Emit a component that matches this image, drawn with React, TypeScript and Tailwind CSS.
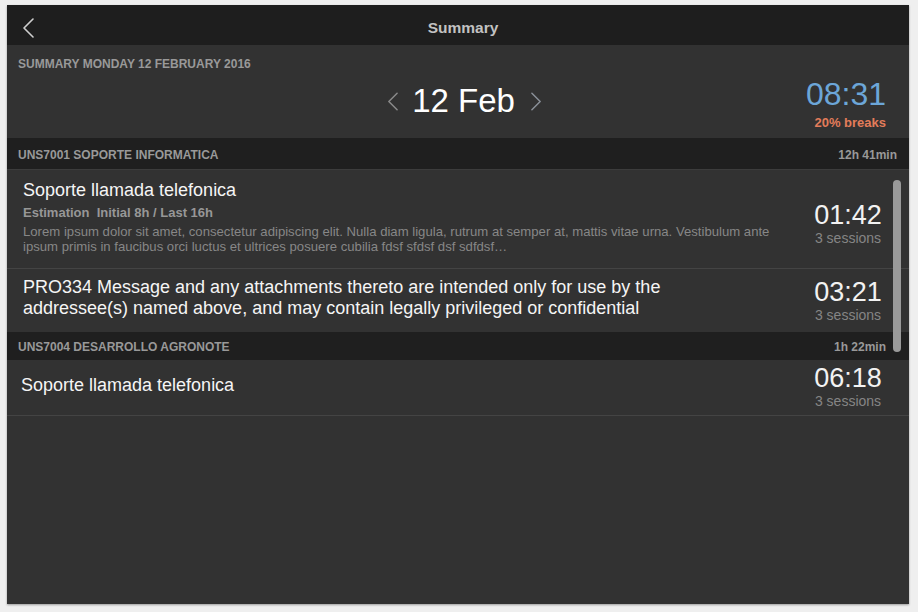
import React from 'react'

type Entry = {
  title: React.ReactNode
  time: string
  sessions: string
}

const ChevronLeft = ({ className }: { className?: string }) => (
  <svg viewBox="0 0 12 20" className={className} fill="none" stroke="currentColor" strokeWidth={1.6}>
    <polyline points="11,1 2,10 11,19" strokeLinecap="round" strokeLinejoin="round" />
  </svg>
)

const ChevronRight = ({ className }: { className?: string }) => (
  <svg viewBox="0 0 12 20" className={className} fill="none" stroke="currentColor" strokeWidth={1.6}>
    <polyline points="1,1 10,10 1,19" strokeLinecap="round" strokeLinejoin="round" />
  </svg>
)

const SectionHeader = ({ label, total, right }: { label: string; total: string; right: string }) => (
  <div className="flex items-center justify-between bg-[#1f1f1f] pl-[11px] text-[12px] font-bold text-[#999999] leading-[14px]">
    <span>{label}</span>
    <span className={right}>{total}</span>
  </div>
)

const TimeBlock = ({ time, sessions, className = '' }: { time: string; sessions: string; className?: string }) => (
  <div className={`w-[80px] shrink-0 text-center ${className}`}>
    <div className="text-[27px] leading-[28px] text-[#f2f2f2]">{time}</div>
    <div className="mt-[1px] text-[14px] leading-[16px] text-[#858585]">{sessions}</div>
  </div>
)

export default function App() {
  const second: Entry = {
    title: (
      <>
        PRO334 Message and any attachments thereto are intended only for use by the
        <br />
        addressee(s) named above, and may contain legally privileged or confidential
      </>
    ),
    time: '03:21',
    sessions: '3 sessions',
  }

  return (
    <div
      className="w-[918px] h-[612px] bg-[#efefef] pt-[5px] pl-[7px]"
      style={{ fontFamily: '"Liberation Sans", Arial, sans-serif' }}
    >
      <div className="relative flex flex-col w-[902px] h-[599px] bg-[#323232] shadow-[0_1px_2px_rgba(0,0,0,0.35)] overflow-hidden">
        {/* nav bar */}
        <div className="relative flex h-[40px] shrink-0 items-center justify-center bg-[#1e1e1e]">
          <ChevronLeft className="absolute left-[15px] top-[13px] h-[20px] w-[12px] text-[#cfcfcf]" />
          <span className="ml-[10px] mt-[5px] text-[15.5px] font-bold text-[#c2c2c2]">Summary</span>
        </div>

        {/* day summary */}
        <div className="flex h-[93px] shrink-0 flex-col px-[11px] pt-[12px]">
          <div className="text-[12px] font-bold leading-[14px] text-[#999999]">SUMMARY MONDAY 12 FEBRUARY 2016</div>
          <div className="grid grid-cols-[1fr_auto_1fr]">
            <div />
            <div className="ml-[13px] mt-[11px] self-start flex items-center gap-[14px]">
              <ChevronLeft className="mt-[1px] h-[19px] w-[11px] text-[#8a8a8a]" />
              <span className="text-[33px] leading-[38px] text-white">12 Feb</span>
              <ChevronRight className="mt-[1px] ml-[2px] h-[19px] w-[11px] text-[#8a9099]" />
            </div>
            <div className="mt-[7px] pr-[12px] text-right">
              <div className="text-[32px] leading-[32px] text-[#6ca6d8]">08:31</div>
              <div className="mt-[5px] text-[13px] font-bold leading-[15px] text-[#e27c5a]">20% breaks</div>
            </div>
          </div>
        </div>

        {/* list */}
        <div className="relative flex flex-col">
          <div className="h-[32px] flex flex-col justify-center bg-[#1f1f1f] border-b border-[#3c3c3c] pt-[3px]">
            <SectionHeader label="UNS7001 SOPORTE INFORMATICA" total="12h 41min" right="pr-[12px]" />
          </div>

          <div className="flex h-[99px] items-start border-b border-[#444444] pr-[21px]">
            <div className="flex-1 pl-[16px] pt-[10px]">
              <div className="text-[18px] leading-[21px] text-[#f5f5f5]">Soporte llamada telefonica</div>
              <div className="mt-[4px] whitespace-pre text-[13px] font-bold leading-[16px] text-[#979797]">
                {'Estimation  Initial 8h / Last 16h'}
              </div>
              <div className="mt-[3px] text-[13.15px] leading-[15px] text-[#878787]">
                Lorem ipsum dolor sit amet, consectetur adipiscing elit. Nulla diam ligula, rutrum at semper at, mattis vitae urna. Vestibulum ante
                <br />
                ipsum primis in faucibus orci luctus et ultrices posuere cubilia fdsf sfdsf dsf sdfdsf…
              </div>
            </div>
            <TimeBlock time="01:42" sessions="3 sessions" className="mt-[31px]" />
          </div>

          <div className="flex h-[63px] items-start pr-[21px]">
            <div className="flex-1 pl-[16px] pt-[8px] text-[18px] leading-[21px] text-[#f5f5f5]">{second.title}</div>
            <TimeBlock time={second.time} sessions={second.sessions} className="mt-[9px]" />
          </div>

          <div className="h-[28px] flex flex-col justify-center bg-[#1f1f1f] pt-[2px]">
            <SectionHeader label="UNS7004 DESARROLLO AGRONOTE" total="1h 22min" right="pr-[23px]" />
          </div>

          <div className="flex h-[56px] items-start border-b border-[#444444] pr-[21px]">
            <div className="flex-1 pl-[14px] pt-[15px] text-[18px] leading-[21px] text-[#f5f5f5]">Soporte llamada telefonica</div>
            <TimeBlock time="06:18" sessions="3 sessions" className="mt-[4px] -ml-[2px]" />
          </div>

          {/* scroll indicator */}
          <div className="absolute right-[8px] top-[42px] h-[172px] w-[8px] rounded-full bg-[#9a9a9a]" />
        </div>
      </div>
    </div>
  )
}
